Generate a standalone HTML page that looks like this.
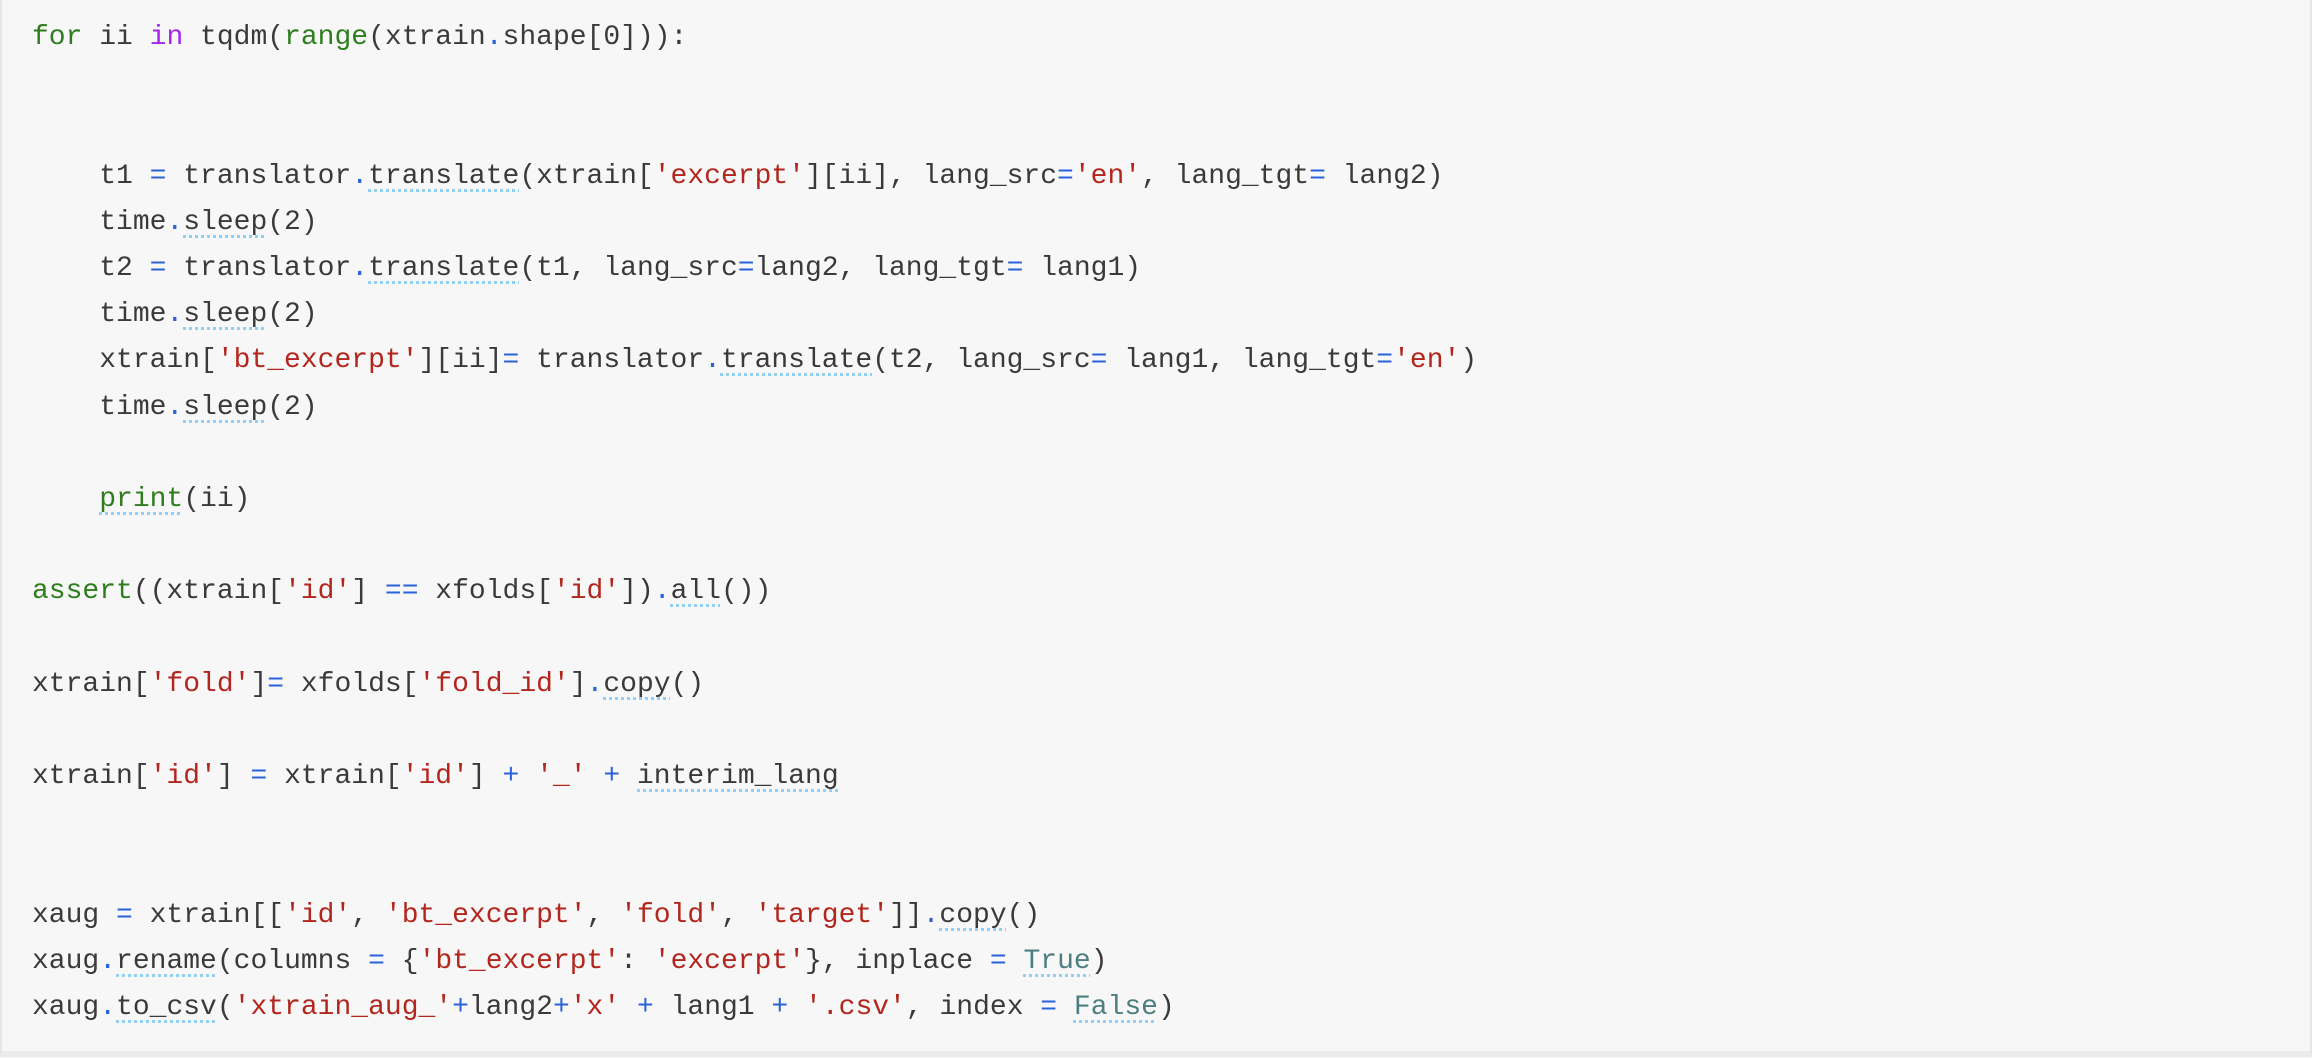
<!DOCTYPE html>
<html><head><meta charset="utf-8"><style>
html,body{margin:0;padding:0;background:#f7f7f7;width:2312px;height:1058px;overflow:hidden}
.box{position:absolute;left:0;top:0;width:2308px;height:1051px;border-left:2px solid #e6e6e6;border-bottom:6px solid #ebebeb;border-right:2px solid #e6e6e6;background:#f7f7f7}
pre{margin:0;position:absolute;left:32px;top:15px;font-family:"Liberation Mono",monospace;font-size:28px;line-height:46.2px;color:#3a3a3a;white-space:pre}
.k{color:#2e7d1e}.p{color:#a526e8}.s{color:#b3261e}.o{color:#2962d9}.c{color:#4d7f80}
.u{text-decoration:underline dotted #8fd0f7;text-decoration-thickness:3px;text-underline-offset:6px}
</style></head><body><div class="box"></div>
<pre><span class="k">for</span> ii <span class="p">in</span> tqdm(<span class="k">range</span>(xtrain<span class="o">.</span>shape[0])):


    t1 <span class="o">=</span> translator<span class="o">.</span><span class="u">translate</span>(xtrain[<span class="s">'excerpt'</span>][ii], lang_src<span class="o">=</span><span class="s">'en'</span>, lang_tgt<span class="o">=</span> lang2)
    time<span class="o">.</span><span class="u">sleep</span>(2)
    t2 <span class="o">=</span> translator<span class="o">.</span><span class="u">translate</span>(t1, lang_src<span class="o">=</span>lang2, lang_tgt<span class="o">=</span> lang1)
    time<span class="o">.</span><span class="u">sleep</span>(2)
    xtrain[<span class="s">'bt_excerpt'</span>][ii]<span class="o">=</span> translator<span class="o">.</span><span class="u">translate</span>(t2, lang_src<span class="o">=</span> lang1, lang_tgt<span class="o">=</span><span class="s">'en'</span>)
    time<span class="o">.</span><span class="u">sleep</span>(2)

    <span class="k u">print</span>(ii)

<span class="k">assert</span>((xtrain[<span class="s">'id'</span>] <span class="o">==</span> xfolds[<span class="s">'id'</span>])<span class="o">.</span><span class="u">all</span>())

xtrain[<span class="s">'fold'</span>]<span class="o">=</span> xfolds[<span class="s">'fold_id'</span>]<span class="o">.</span><span class="u">copy</span>()

xtrain[<span class="s">'id'</span>] <span class="o">=</span> xtrain[<span class="s">'id'</span>] <span class="o">+</span> <span class="s">'_'</span> <span class="o">+</span> <span class="u">interim_lang</span>


xaug <span class="o">=</span> xtrain[[<span class="s">'id'</span>, <span class="s">'bt_excerpt'</span>, <span class="s">'fold'</span>, <span class="s">'target'</span>]]<span class="o">.</span><span class="u">copy</span>()
xaug<span class="o">.</span><span class="u">rename</span>(columns <span class="o">=</span> {<span class="s">'bt_excerpt'</span>: <span class="s">'excerpt'</span>}, inplace <span class="o">=</span> <span class="c u">True</span>)
xaug<span class="o">.</span><span class="u">to_csv</span>(<span class="s">'xtrain_aug_'</span><span class="o">+</span>lang2<span class="o">+</span><span class="s">'x'</span> <span class="o">+</span> lang1 <span class="o">+</span> <span class="s">'.csv'</span>, index <span class="o">=</span> <span class="c u">False</span>)</pre>
</body></html>
